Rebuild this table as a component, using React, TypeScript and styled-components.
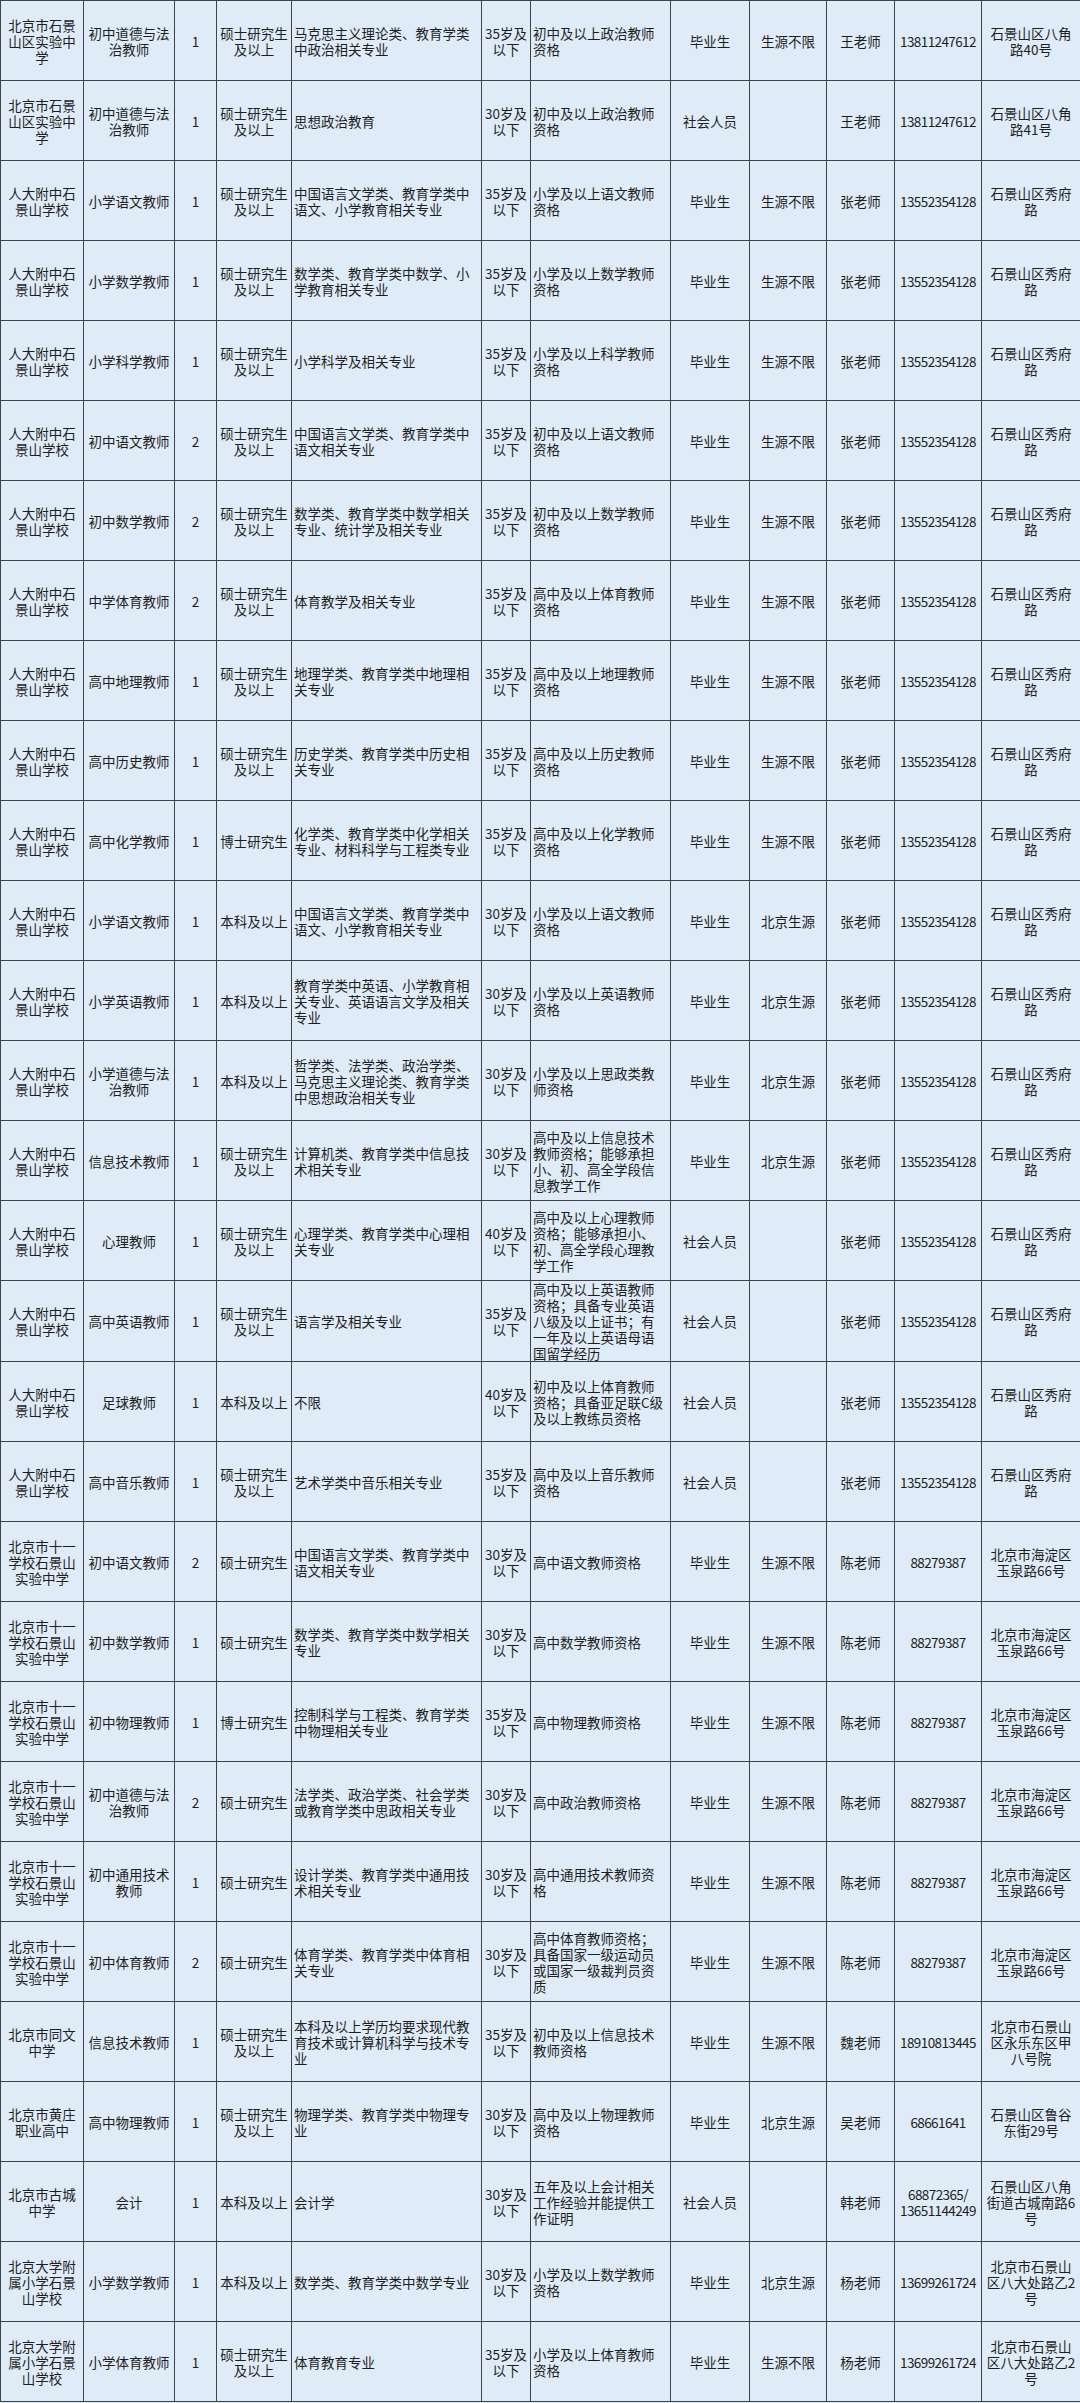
import React from "react";
import styled, { createGlobalStyle } from "styled-components";

const GlobalStyle = createGlobalStyle`
  html, body {
    margin: 0;
    padding: 0;
    background: #dfebf7;
  }
  body {
    font-family: "Noto Sans CJK SC", "Noto Sans", sans-serif;
  }
`;

// column widths read off the screenshot
const COLS = [83, 91, 42, 75, 190, 49, 140, 79, 77, 68, 87, 99];

type Align = "center" | "left";
const ALIGN: Align[] = [
  "center", "center", "center", "center", "left", "center",
  "left", "center", "center", "center", "center", "center",
];

type Row = string[];

const SY = "北京市石景\n山区实验中\n学";
const RD = "人大附中石\n景山学校";
const SY11 = "北京市十一\n学校石景山\n实验中学";
const BDFX = "北京大学附\n属小学石景\n山学校";
const SS = "硕士研究生\n及以上";
const A35 = "35岁及\n以下";
const A30 = "30岁及\n以下";
const A40 = "40岁及\n以下";
const XF = "石景山区秀府\n路";
const ZH = "13552354128";
const YQ = "北京市海淀区\n玉泉路66号";
const BDC = "北京市石景山\n区八大处路乙2\n号";

const rows: Row[] = [
  [SY, "初中道德与法\n治教师", "1", SS, "马克思主义理论类、教育学类\n中政治相关专业", A35, "初中及以上政治教师\n资格", "毕业生", "生源不限", "王老师", "13811247612", "石景山区八角\n路40号"],
  [SY, "初中道德与法\n治教师", "1", SS, "思想政治教育", A30, "初中及以上政治教师\n资格", "社会人员", "", "王老师", "13811247612", "石景山区八角\n路41号"],
  [RD, "小学语文教师", "1", SS, "中国语言文学类、教育学类中\n语文、小学教育相关专业", A35, "小学及以上语文教师\n资格", "毕业生", "生源不限", "张老师", ZH, XF],
  [RD, "小学数学教师", "1", SS, "数学类、教育学类中数学、小\n学教育相关专业", A35, "小学及以上数学教师\n资格", "毕业生", "生源不限", "张老师", ZH, XF],
  [RD, "小学科学教师", "1", SS, "小学科学及相关专业", A35, "小学及以上科学教师\n资格", "毕业生", "生源不限", "张老师", ZH, XF],
  [RD, "初中语文教师", "2", SS, "中国语言文学类、教育学类中\n语文相关专业", A35, "初中及以上语文教师\n资格", "毕业生", "生源不限", "张老师", ZH, XF],
  [RD, "初中数学教师", "2", SS, "数学类、教育学类中数学相关\n专业、统计学及相关专业", A35, "初中及以上数学教师\n资格", "毕业生", "生源不限", "张老师", ZH, XF],
  [RD, "中学体育教师", "2", SS, "体育教学及相关专业", A35, "高中及以上体育教师\n资格", "毕业生", "生源不限", "张老师", ZH, XF],
  [RD, "高中地理教师", "1", SS, "地理学类、教育学类中地理相\n关专业", A35, "高中及以上地理教师\n资格", "毕业生", "生源不限", "张老师", ZH, XF],
  [RD, "高中历史教师", "1", SS, "历史学类、教育学类中历史相\n关专业", A35, "高中及以上历史教师\n资格", "毕业生", "生源不限", "张老师", ZH, XF],
  [RD, "高中化学教师", "1", "博士研究生", "化学类、教育学类中化学相关\n专业、材料科学与工程类专业", A35, "高中及以上化学教师\n资格", "毕业生", "生源不限", "张老师", ZH, XF],
  [RD, "小学语文教师", "1", "本科及以上", "中国语言文学类、教育学类中\n语文、小学教育相关专业", A30, "小学及以上语文教师\n资格", "毕业生", "北京生源", "张老师", ZH, XF],
  [RD, "小学英语教师", "1", "本科及以上", "教育学类中英语、小学教育相\n关专业、英语语言文学及相关\n专业", A30, "小学及以上英语教师\n资格", "毕业生", "北京生源", "张老师", ZH, XF],
  [RD, "小学道德与法\n治教师", "1", "本科及以上", "哲学类、法学类、政治学类、\n马克思主义理论类、教育学类\n中思想政治相关专业", A30, "小学及以上思政类教\n师资格", "毕业生", "北京生源", "张老师", ZH, XF],
  [RD, "信息技术教师", "1", SS, "计算机类、教育学类中信息技\n术相关专业", A30, "高中及以上信息技术\n教师资格；能够承担\n小、初、高全学段信\n息教学工作", "毕业生", "北京生源", "张老师", ZH, XF],
  [RD, "心理教师", "1", SS, "心理学类、教育学类中心理相\n关专业", A40, "高中及以上心理教师\n资格；能够承担小、\n初、高全学段心理教\n学工作", "社会人员", "", "张老师", ZH, XF],
  [RD, "高中英语教师", "1", SS, "语言学及相关专业", A35, "高中及以上英语教师\n资格；具备专业英语\n八级及以上证书；有\n一年及以上英语母语\n国留学经历", "社会人员", "", "张老师", ZH, XF],
  [RD, "足球教师", "1", "本科及以上", "不限", A40, "初中及以上体育教师\n资格；具备亚足联C级\n及以上教练员资格", "社会人员", "", "张老师", ZH, XF],
  [RD, "高中音乐教师", "1", SS, "艺术学类中音乐相关专业", A35, "高中及以上音乐教师\n资格", "社会人员", "", "张老师", ZH, XF],
  [SY11, "初中语文教师", "2", "硕士研究生", "中国语言文学类、教育学类中\n语文相关专业", A30, "高中语文教师资格", "毕业生", "生源不限", "陈老师", "88279387", YQ],
  [SY11, "初中数学教师", "1", "硕士研究生", "数学类、教育学类中数学相关\n专业", A30, "高中数学教师资格", "毕业生", "生源不限", "陈老师", "88279387", YQ],
  [SY11, "初中物理教师", "1", "博士研究生", "控制科学与工程类、教育学类\n中物理相关专业", A35, "高中物理教师资格", "毕业生", "生源不限", "陈老师", "88279387", YQ],
  [SY11, "初中道德与法\n治教师", "2", "硕士研究生", "法学类、政治学类、社会学类\n或教育学类中思政相关专业", A30, "高中政治教师资格", "毕业生", "生源不限", "陈老师", "88279387", YQ],
  [SY11, "初中通用技术\n教师", "1", "硕士研究生", "设计学类、教育学类中通用技\n术相关专业", A30, "高中通用技术教师资\n格", "毕业生", "生源不限", "陈老师", "88279387", YQ],
  [SY11, "初中体育教师", "2", "硕士研究生", "体育学类、教育学类中体育相\n关专业", A30, "高中体育教师资格；\n具备国家一级运动员\n或国家一级裁判员资\n质", "毕业生", "生源不限", "陈老师", "88279387", YQ],
  ["北京市同文\n中学", "信息技术教师", "1", SS, "本科及以上学历均要求现代教\n育技术或计算机科学与技术专\n业", A35, "初中及以上信息技术\n教师资格", "毕业生", "生源不限", "魏老师", "18910813445", "北京市石景山\n区永乐东区甲\n八号院"],
  ["北京市黄庄\n职业高中", "高中物理教师", "1", SS, "物理学类、教育学类中物理专\n业", A30, "高中及以上物理教师\n资格", "毕业生", "北京生源", "吴老师", "68661641", "石景山区鲁谷\n东街29号"],
  ["北京市古城\n中学", "会计", "1", "本科及以上", "会计学", A30, "五年及以上会计相关\n工作经验并能提供工\n作证明", "社会人员", "", "韩老师", "68872365/\n13651144249", "石景山区八角\n街道古城南路6\n号"],
  [BDFX, "小学数学教师", "1", "本科及以上", "数学类、教育学类中数学专业", A30, "小学及以上数学教师\n资格", "毕业生", "北京生源", "杨老师", "13699261724", BDC],
  [BDFX, "小学体育教师", "1", SS, "体育教育专业", A35, "小学及以上体育教师\n资格", "毕业生", "生源不限", "杨老师", "13699261724", BDC],
];

const Sheet = styled.table`
  width: 1080px;
  table-layout: fixed;
  border-collapse: collapse;
  background: #dfebf7;
  color: #1e1e1e;
  font-size: 13.5px;
  line-height: 16px;
`;

const Line = styled.tr`
  height: 80px;
`;

const Cell = styled.td<{ $align: Align; $digits?: boolean }>`
  border: 1px solid #3d434a;
  padding: 0 2px;
  text-align: ${(p) => p.$align};
  vertical-align: middle;
  white-space: pre-line;
  overflow: hidden;
  letter-spacing: ${(p) => (p.$digits ? "-0.6px" : "0")};
`;

export default function App() {
  return (
    <>
      <GlobalStyle />
      <Sheet>
        <colgroup>
          {COLS.map((w, i) => (
            <col key={i} style={{ width: w }} />
          ))}
        </colgroup>
        <tbody>
          {rows.map((row, r) => (
            <Line key={r}>
              {row.map((text, c) => (
                <Cell key={c} $align={ALIGN[c]} $digits={c === 10}>
                  {text}
                </Cell>
              ))}
            </Line>
          ))}
        </tbody>
      </Sheet>
    </>
  );
}
